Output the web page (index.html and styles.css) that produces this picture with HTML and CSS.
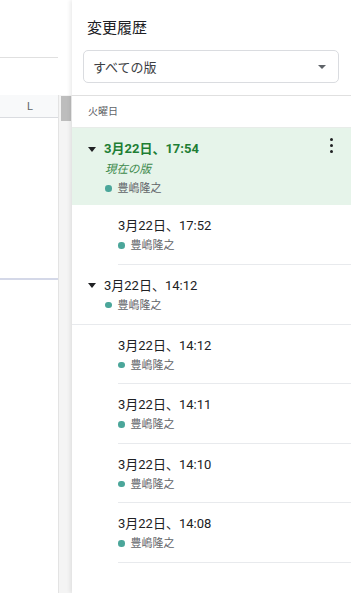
FILE: index.html
```html
<!DOCTYPE html>
<html lang="ja">
<head>
    <meta charset="UTF-8">
    <meta name="viewport" content="width=device-width, initial-scale=1.0">
    <title>変更履歴</title>
    <link rel="stylesheet" href="styles.css">
</head>
<body>
    <div class="sheet">
        <div class="sheet-top"></div>
        <div class="sheet-gap"></div>
        <div class="col-header">L</div>
        <div class="sheet-grid">
            <div class="sel-line"></div>
        </div>
    </div>

    <div class="scrollbar">
        <div class="track">
            <div class="thumb"></div>
        </div>
    </div>

    <div class="panel">
        <h1 class="panel-title">変更履歴</h1>
        <div class="filter">
            <span>すべての版</span>
            <span class="caret"></span>
        </div>

        <div class="day">火曜日</div>

        <!-- current version -->
        <div class="rev current">
            <div class="rev-line">
                <span class="toggle"></span>
                <span class="rev-date">3月22日、17:54</span>
                <span class="more"><i></i><i></i><i></i></span>
            </div>
            <div class="rev-note">現在の版</div>
            <div class="rev-user"><span class="dot"></span>豊嶋隆之</div>
        </div>

        <div class="rev sub">
            <div class="rev-date">3月22日、17:52</div>
            <div class="rev-user"><span class="dot"></span>豊嶋隆之</div>
        </div>

        <div class="rev group">
            <div class="rev-line">
                <span class="toggle"></span>
                <span class="rev-date">3月22日、14:12</span>
            </div>
            <div class="rev-user"><span class="dot"></span>豊嶋隆之</div>
        </div>

        <div class="rev sub">
            <div class="rev-date">3月22日、14:12</div>
            <div class="rev-user"><span class="dot"></span>豊嶋隆之</div>
        </div>
        <div class="rev sub">
            <div class="rev-date">3月22日、14:11</div>
            <div class="rev-user"><span class="dot"></span>豊嶋隆之</div>
        </div>
        <div class="rev sub">
            <div class="rev-date">3月22日、14:10</div>
            <div class="rev-user"><span class="dot"></span>豊嶋隆之</div>
        </div>
        <div class="rev sub">
            <div class="rev-date">3月22日、14:08</div>
            <div class="rev-user"><span class="dot"></span>豊嶋隆之</div>
        </div>
    </div>
</body>
</html>
```

FILE: styles.css
```css
html, body {
    height: 100%;
}

body {
    margin: 0;
    display: flex;
    font-family: Roboto, 'Noto Sans CJK JP', sans-serif;
    color: #202124;
    background-color: #fff;
    overflow: hidden;
}

/* Spreadsheet behind the panel */
.sheet {
    width: 58px;
    display: flex;
    flex-direction: column;
}

.sheet-top {
    height: 57px;
    border-bottom: 1px solid #e0e0e0;
}

.sheet-gap {
    height: 37px;
}

.col-header {
    height: 22px;
    background-color: #f8f9fa;
    border-bottom: 1px solid #dadce0;
    font-size: 11px;
    color: #5f6368;
    display: flex;
    align-items: center;
    justify-content: center;
    padding-left: 2px;
}

.sheet-grid {
    flex: 1;
    padding-top: 160px;
}

.sel-line {
    height: 2px;
    background-color: #d4d8e8;
}

/* Scrollbar */
.scrollbar {
    width: 14px;
    display: flex;
    flex-direction: column;
    padding-top: 95px;
}

.track {
    flex: 1;
    background-color: #f4f4f4;
    border-left: 1px solid #e3e3e3;
    padding: 1px 1px 0 2px;
}

.thumb {
    height: 25px;
    background-color: #bdbdbd;
}

/* Version history panel */
.panel {
    flex: 1;
    background-color: #fff;
    box-shadow: -2px 0 4px rgba(0,0,0,0.08);
}

.panel-title {
    margin: 0;
    padding: 17px 0 0 15px;
    height: 33px;
    font-size: 15px;
    font-weight: 400;
    line-height: 22px;
}

.filter {
    margin: 0 12px 0 11px;
    height: 33px;
    border: 1px solid #dadce0;
    border-radius: 5px;
    box-sizing: border-box;
    display: flex;
    align-items: center;
    justify-content: space-between;
    padding: 0 12px 0 9px;
    font-size: 13px;
    color: #3c4043;
}

.caret {
    width: 0;
    height: 0;
    border-left: 4.5px solid transparent;
    border-right: 4.5px solid transparent;
    border-top: 4.5px solid #5f6368;
}

.day {
    margin-top: 12px;
    border-top: 1px solid #e0e0e0;
    height: 31px;
    padding-left: 16px;
    font-size: 10px;
    line-height: 31px;
    color: #5f6368;
}

.rev {
    box-sizing: border-box;
    padding-top: 11px;
}

.rev-line {
    display: flex;
    align-items: center;
    padding-left: 16px;
}

.toggle {
    width: 0;
    height: 0;
    border-left: 4.5px solid transparent;
    border-right: 4.5px solid transparent;
    border-top: 5px solid #202124;
    margin-right: 8px;
}

.rev-date {
    font-size: 13px;
    line-height: 20px;
    font-weight: 400;
    color: #202124;
}

.rev-user {
    display: flex;
    align-items: center;
    font-size: 11px;
    line-height: 19px;
    color: #5f6368;
}

.dot {
    width: 6.5px;
    height: 6.5px;
    border-radius: 50%;
    background-color: #4ba69a;
    margin-right: 6px;
}

/* current version row */
.rev.current {
    height: 78px;
    background-color: #e6f4ea;
    border-top: 1px solid #e8ece9;
}

.current .rev-date {
    font-weight: 700;
    color: #1e7e34;
    flex: 1;
}

.rev-note {
    padding-left: 33px;
    font-size: 11.5px;
    line-height: 20px;
    font-style: italic;
    color: #3d8a4c;
}

.current .rev-user,
.group .rev-user {
    padding-left: 33px;
}

.more {
    display: flex;
    flex-direction: column;
    gap: 2.5px;
    margin: -7px 18px 0 0;
}

.more i {
    width: 3.5px;
    height: 3.5px;
    border-radius: 50%;
    background-color: #202124;
}

/* grouped rows */
.rev.group {
    height: 60px;
    border-bottom: 1px solid #e8eaed;
}

.rev.sub {
    height: 59.5px;
    margin-left: 46px;
    border-bottom: 1px solid #e8eaed;
}
```
